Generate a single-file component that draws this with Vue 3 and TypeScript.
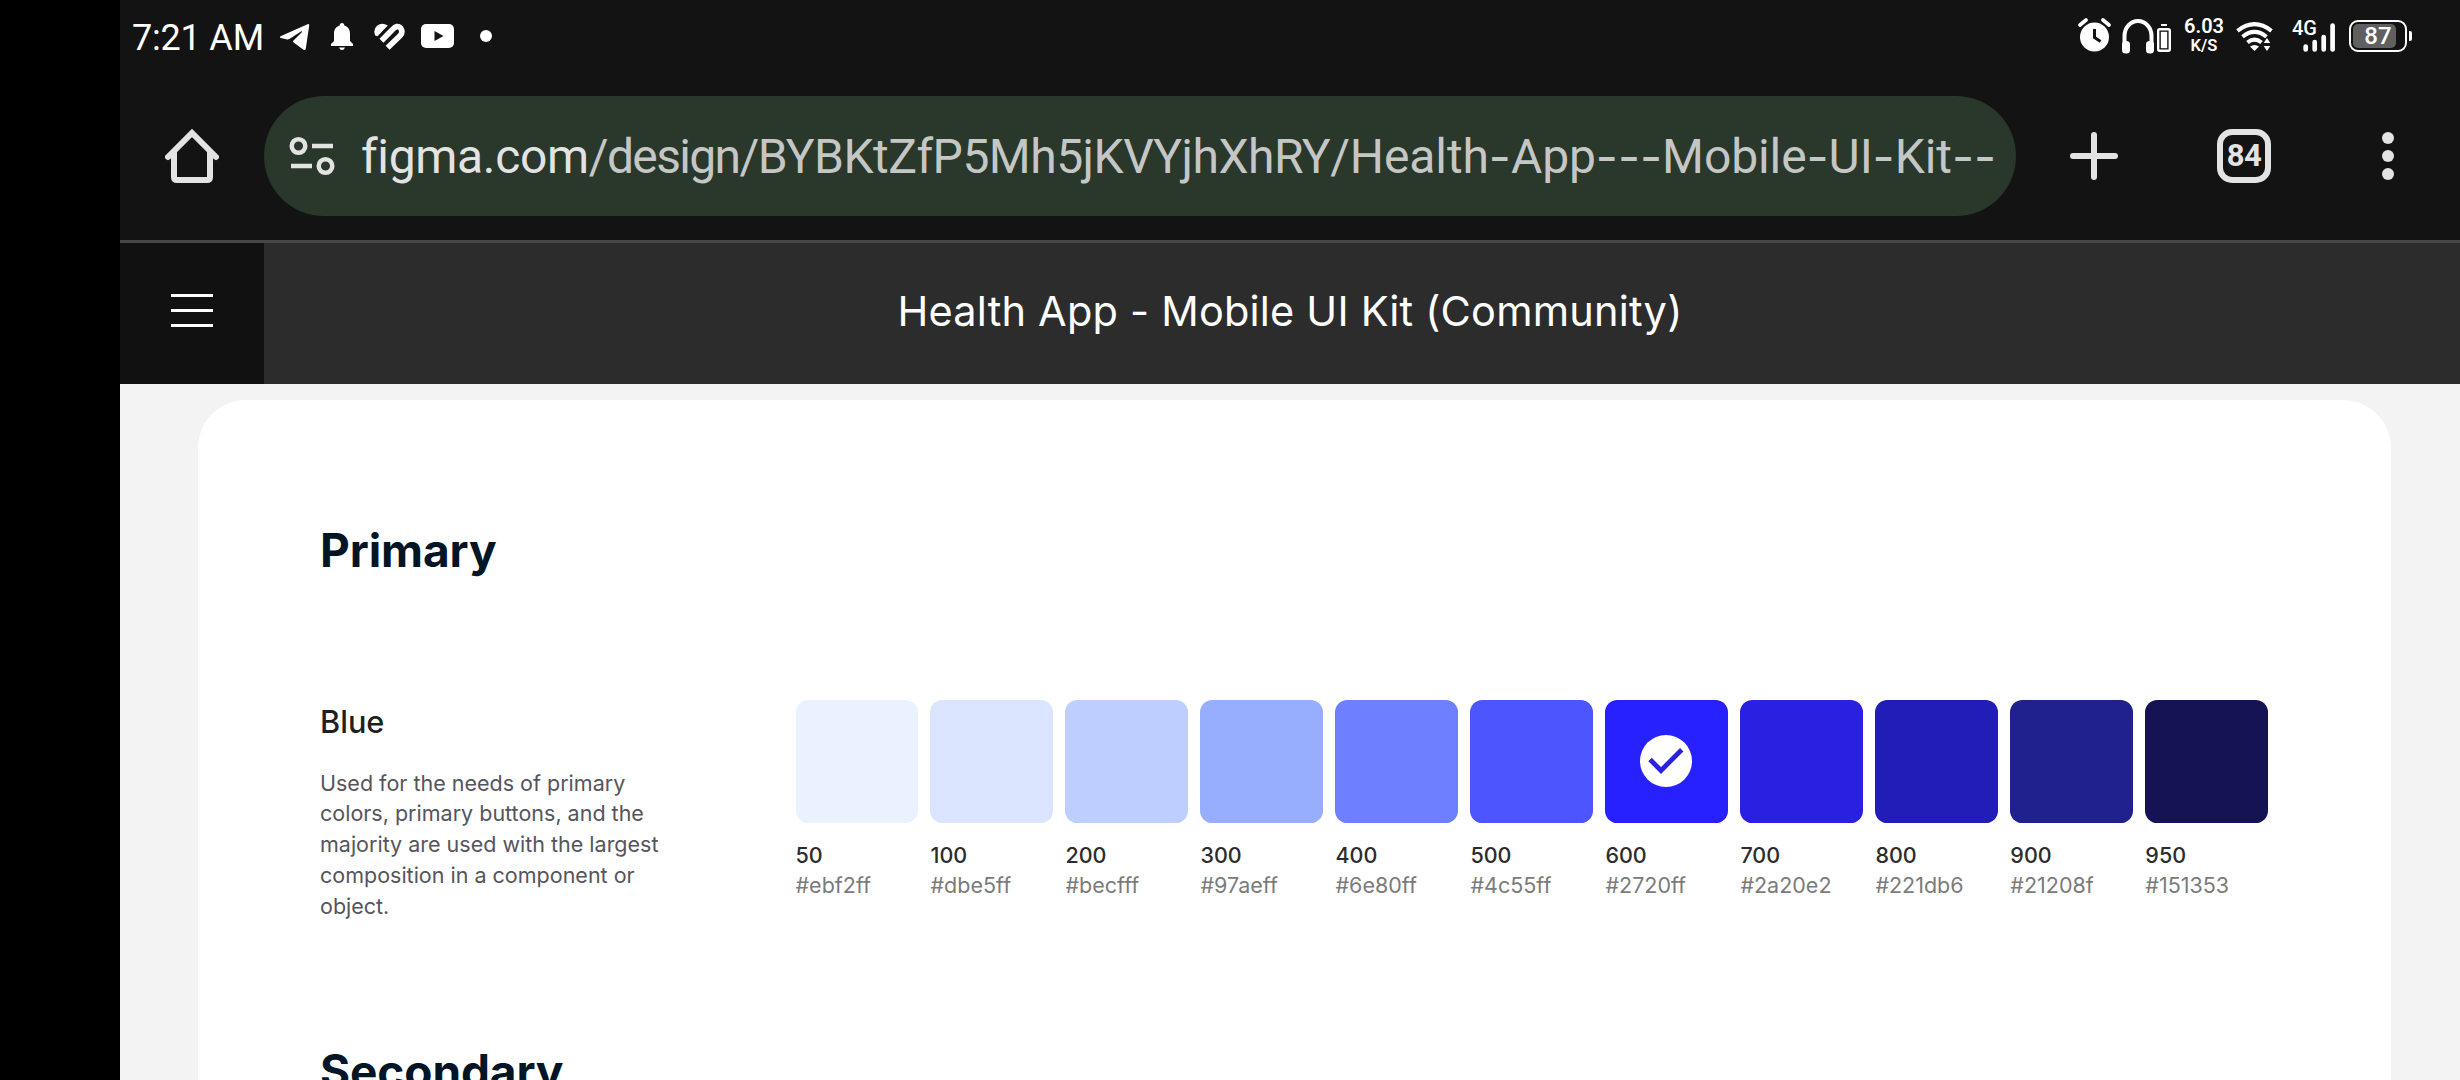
<script setup lang="ts">
interface Swatch {
  step: number
  hex: string
  selected?: boolean
}

const swatches: Swatch[] = [
  { step: 50, hex: '#ebf2ff' },
  { step: 100, hex: '#dbe5ff' },
  { step: 200, hex: '#becfff' },
  { step: 300, hex: '#97aeff' },
  { step: 400, hex: '#6e80ff' },
  { step: 500, hex: '#4c55ff' },
  { step: 600, hex: '#2720ff', selected: true },
  { step: 700, hex: '#2a20e2' },
  { step: 800, hex: '#221db6' },
  { step: 900, hex: '#21208f' },
  { step: 950, hex: '#151353' },
]

// Hyphen runs are split out because they use a wider glyph.
const slug: string[] = '/Health-App---Mobile-UI-Kit--'.split(/(-+)/).filter(Boolean)
</script>

<template>
  <div class="screen">
    <div class="cutout"></div>
    <div class="device">
      <div class="status">
        <span class="time">7:21 AM</span>
        <svg class="i-telegram" width="32" height="30" viewBox="0 0 32 30" fill="#fff"><path d="M1.500 14.200 28.500 2.200Q30.500 1.500 30.200 3.800L26.800 26.600Q26.300 29 24.200 27.600L14.600 20.400Q13.400 19.400 14.500 18.400L23 10Q23.400 8.800 22 9.400L10.300 17Q8.900 17.800 7.400 17.300L1.700 16Q.2 15.200 1.500 14.200z" /></svg>
        <svg class="i-bell" width="22" height="28" viewBox="0 0 22 28" fill="#fff"><path d="M11 0c1.500 0 2.300 1 2.300 2.500 3.800 1 5.700 4.300 5.700 8V18l3 3v2H0v-2l3-3v-7.500c0-3.700 1.900-7 5.700-8C8.700 1 9.500 0 11 0zM8 24.500h6Q13 27 11 27T8 24.500z" /></svg>
        <svg class="i-heart" width="32" height="28" viewBox="0 0 32 28" fill="none" stroke="#fff"><path d="M1.200 12.500Q-1.200 6.500 3 2.800 8-1.200 13.800 2.600L3.500 13.200z" fill="#fff" stroke="none" /><path d="M7.500 17.800 18.500 6.500Q23 1.500 26.500 5 29.500 9 26 12.800L13.600 24.800" stroke-width="5.600" /></svg>
        <svg class="i-tube" width="33" height="24" viewBox="0 0 33 24"><rect width="33" height="24" rx="5" fill="#fff" /><path d="m13.500 7 9 5-9 5z" fill="#131313" /></svg>
        <i class="dot"></i>
        <svg class="i-alarm" width="34" height="34" viewBox="0 0 34 34" fill="none" stroke="#fff"><circle cx="16.500" cy="19" r="14.500" fill="#fff" stroke="none" /><path d="m2 7 6-5M31 7l-6-5" stroke-width="3.600" stroke-linecap="round" /><path d="M16.500 11v8.500l6 4" stroke="#131313" stroke-width="3" /></svg>
        <svg class="i-head" width="50" height="35" viewBox="0 0 50 35"><path d="M2.500 27V17a13.500 15 0 0 1 27 0v10" fill="none" stroke="#fff" stroke-width="4" /><rect x="0" y="22" width="8" height="12.500" rx="3.500" fill="#fff" /><rect x="24" y="22" width="8" height="12.500" rx="3.500" fill="#fff" /><path d="M39 5h6v2h-6z" fill="#fff" /><rect x="36.200" y="10.200" width="11.600" height="21.600" rx="1.500" fill="none" stroke="#fff" stroke-width="2.400" /><path d="M38.800 12.800h6.400v16.400h-6.400z" fill="#fff" /></svg>
        <div class="speed"><b>6.03</b><small>K/S</small></div>
        <svg class="i-wifi" width="37" height="30" viewBox="0 0 37 30" fill="none" stroke="#fff" stroke-width="4"><path d="M1.500 8.800Q18.500-4.500 35.500 8.800M6.500 14.700Q18.500 5 30.500 14.700M11.500 20.500Q18.500 14.800 25.500 20.500" /><path d="m18.500 29-4.500-4.500q4.500-3 9 0zM31 16l-3.300 5h6.600zM31 29l-3.300-5h6.600z" fill="#fff" stroke="none" /></svg>
        <div class="signal"><span>4G</span><svg width="42" height="30" viewBox="0 0 42 30" stroke="#fff" stroke-width="4.700" stroke-linecap="round"><path d="M12.700 24.500v3M21.700 20v7.500M30.700 15v12.500M39.600 3.500v24" /></svg></div>
        <div class="battery"><i></i><span>87</span></div>
        <i class="nub"></i>
      </div>

      <div class="toolbar">
        <svg class="home" width="54" height="54" viewBox="0 0 54 54" fill="none" stroke="#e3e3e3" stroke-width="6"><path d="m3 28 24-24 24 24" stroke-linecap="round" stroke-linejoin="miter" /><path d="M9 22v26q0 3 3 3h30q3 0 3-3V22" /></svg>
        <div class="omnibox">
          <svg class="tune" width="46" height="40" viewBox="0 0 46 40" fill="none" stroke="#e3e3e3" stroke-width="4.500"><circle cx="9.500" cy="10" r="6.800" /><path d="M23 10h21M2 30h21" /><circle cx="36.500" cy="30" r="6.800" /></svg>
          <div class="url"><span class="host">figma.com</span><span class="route">/design/</span><span class="key">BYBKtZfP5Mh5jKVYjhXhRY</span><span v-for="(part, i) in slug" :key="i" :class="part[0] === '-' ? 'dash' : 'word'">{{ part }}</span></div>
        </div>
        <svg class="plus" width="48" height="48" viewBox="0 0 48 48" stroke="#e3e3e3" stroke-width="6" stroke-linecap="round"><path d="M24 3v42M3 24h42" /></svg>
        <div class="tabs"><span>84</span></div>
        <svg class="more" width="12" height="48" viewBox="0 0 12 48" fill="#e3e3e3"><circle cx="6" cy="6" r="6" /><circle cx="6" cy="24" r="6" /><circle cx="6" cy="42" r="6" /></svg>
      </div>

      <div class="filebar">
        <div class="burger"><i></i><i></i><i></i></div>
        <div class="title">Health App - Mobile UI Kit (Community)</div>
      </div>

      <div class="canvas">
        <div class="card">
          <h2>Primary</h2>
          <div class="row">
            <div class="info">
              <h3>Blue</h3>
              <p>Used for the needs of primary<br />colors, primary buttons, and the<br />majority are used with the largest<br />composition in a component or<br />object.</p>
            </div>
            <div class="swatches">
              <div v-for="s in swatches" :key="s.step" class="swatch">
                <div class="chip" :style="{ background: s.hex }">
                  <svg v-if="s.selected" width="52" height="52" viewBox="0 0 52 52"><circle cx="26" cy="26" r="26" fill="#fff" /><path d="m10 24.500 11 11 20.700-20.700" fill="none" stroke="#2a20e2" stroke-width="4.800" /></svg>
                </div>
                <span class="step">{{ s.step }}</span>
                <span class="hex">{{ s.hex }}</span>
              </div>
            </div>
          </div>
          <h2>Secondary</h2>
        </div>
      </div>
    </div>
  </div>
</template>

<style>
html, body { margin: 0; background: #000; overflow: hidden; }
</style>

<style scoped>
.screen { display: flex; width: 2460px; height: 1080px; overflow: hidden; background: #000; font-family: Inter, "Liberation Sans", sans-serif; }
.screen * { box-sizing: border-box; }
svg { display: block; flex: none; }
.cutout { width: 120px; flex: none; background: #000; }
.device { flex: 1; min-width: 0; height: 1080px; display: flex; flex-direction: column; background: #131313; }

.status { height: 72px; flex: none; display: flex; align-items: flex-start; color: #fff; font-family: Roboto, sans-serif; }
.time { width: 159px; padding-left: 12px; font-size: 36px; line-height: 76px; letter-spacing: -.2px; white-space: nowrap; }
.i-telegram { margin-top: 22px; }
.i-bell { margin: 23px 0 0 20px; }
.i-heart { margin: 23px 0 0 21px; }
.i-tube { margin: 24px 0 0 15px; }
.dot { width: 12px; height: 12px; margin: 30px 0 0 26px; border-radius: 50%; background: #fff; }
.i-alarm { margin: 18px 0 0 auto; }
.i-head { margin: 19px 0 0 10px; }
.speed { width: 40px; margin: 15px 0 0 12px; display: flex; flex-direction: column; align-items: center; }
.speed b { font-size: 20px; line-height: 22px; font-weight: 600; }
.speed small { font-size: 16.500px; line-height: 17px; font-weight: 600; }
.i-wifi { margin: 22px 0 0 12px; }
.signal { width: 43px; height: 30px; margin: 22px 0 0 19px; position: relative; display: flex; justify-content: flex-end; }
.signal span { position: absolute; left: 0; top: -5px; font-size: 20px; line-height: 22px; font-weight: 500; }
.battery { position: relative; width: 58px; height: 32px; margin: 20px 0 0 14px; border: 2px solid #fff; border-radius: 9px; display: flex; align-items: center; justify-content: center; }
.battery i { position: absolute; left: 2px; top: 2px; width: 43px; height: 24px; border-radius: 5px; background: #606060; }
.battery span { position: relative; font-size: 24px; line-height: 28px; font-weight: 500; }
.nub { width: 3px; height: 10px; margin: 31px 48px 0 2px; border-radius: 0 2px 2px 0; background: #fff; }

.toolbar { height: 168px; flex: none; display: flex; align-items: center; }
.home { margin-left: 45px; }
.omnibox { width: 1752px; height: 120px; margin-left: 45px; border-radius: 60px; background: #2a382c; display: flex; align-items: center; }
.tune { margin-left: 25px; }
.url { margin-left: 26px; padding-top: 1px; display: flex; font-family: Roboto, sans-serif; font-size: 48px; line-height: 60px; color: #c4c7c5; white-space: nowrap; }
.host { color: #e3e3e3; letter-spacing: -.33px; }
.route { letter-spacing: -1.650px; }
.key { letter-spacing: -.52px; }
.word { letter-spacing: -.1px; }
.dash { font-family: Inter, sans-serif; font-feature-settings: "calt" 0; }
.plus { margin-left: 54px; }
.tabs { width: 54px; height: 54px; margin-left: 99px; border: 6px solid #e3e3e3; border-radius: 15px; display: flex; align-items: center; justify-content: center; font: 700 31px/42px Roboto, sans-serif; letter-spacing: -.5px; color: #e3e3e3; }
.more { margin-left: 111px; }

.filebar { height: 144px; flex: none; display: flex; border-top: 3px solid #474747; background: #2c2c2c; }
.burger { width: 144px; flex: none; padding-top: 51px; background: #111; display: flex; flex-direction: column; align-items: center; gap: 12px; }
.burger i { width: 42px; height: 3px; background: #fff; }
.title { flex: 1; padding: 0 144px 5px 0; display: flex; align-items: center; justify-content: center; font-size: 41.500px; line-height: 50px; letter-spacing: .2px; color: #fff; white-space: nowrap; }

.canvas { flex: 1; min-height: 0; padding: 16px 69.500px 0 77.500px; background: #f3f3f3; overflow: hidden; }
.card { height: 900px; padding: 122.300px 0 0 122.500px; border-radius: 48px; background: #fff; }
h2 { margin: 0; font-size: 46px; line-height: 56px; font-weight: 700; letter-spacing: -.1px; color: #001526; }
.row { height: 221.300px; margin: 121.700px 0 122px; display: flex; }
.info { width: 475.500px; flex: none; }
h3 { margin: 0 0 24.800px; font-size: 30.700px; line-height: 43px; font-weight: 500; color: #1f1f1f; }
p { margin: 0; font-size: 21.500px; line-height: 30.700px; color: #55555c; white-space: nowrap; }
.swatches { display: flex; gap: 12.200px; }
.swatch { width: 122.800px; display: flex; flex-direction: column; }
.chip { height: 123px; margin-bottom: 16.800px; border-radius: 12.300px; display: flex; align-items: center; justify-content: center; }
.chip svg { margin: 0 1px 1px 0; }
.step, .hex { font-size: 21.500px; line-height: 30.700px; }
.step { font-weight: 500; color: #2c2c2c; }
.hex { color: #7b7b7b; }
</style>
